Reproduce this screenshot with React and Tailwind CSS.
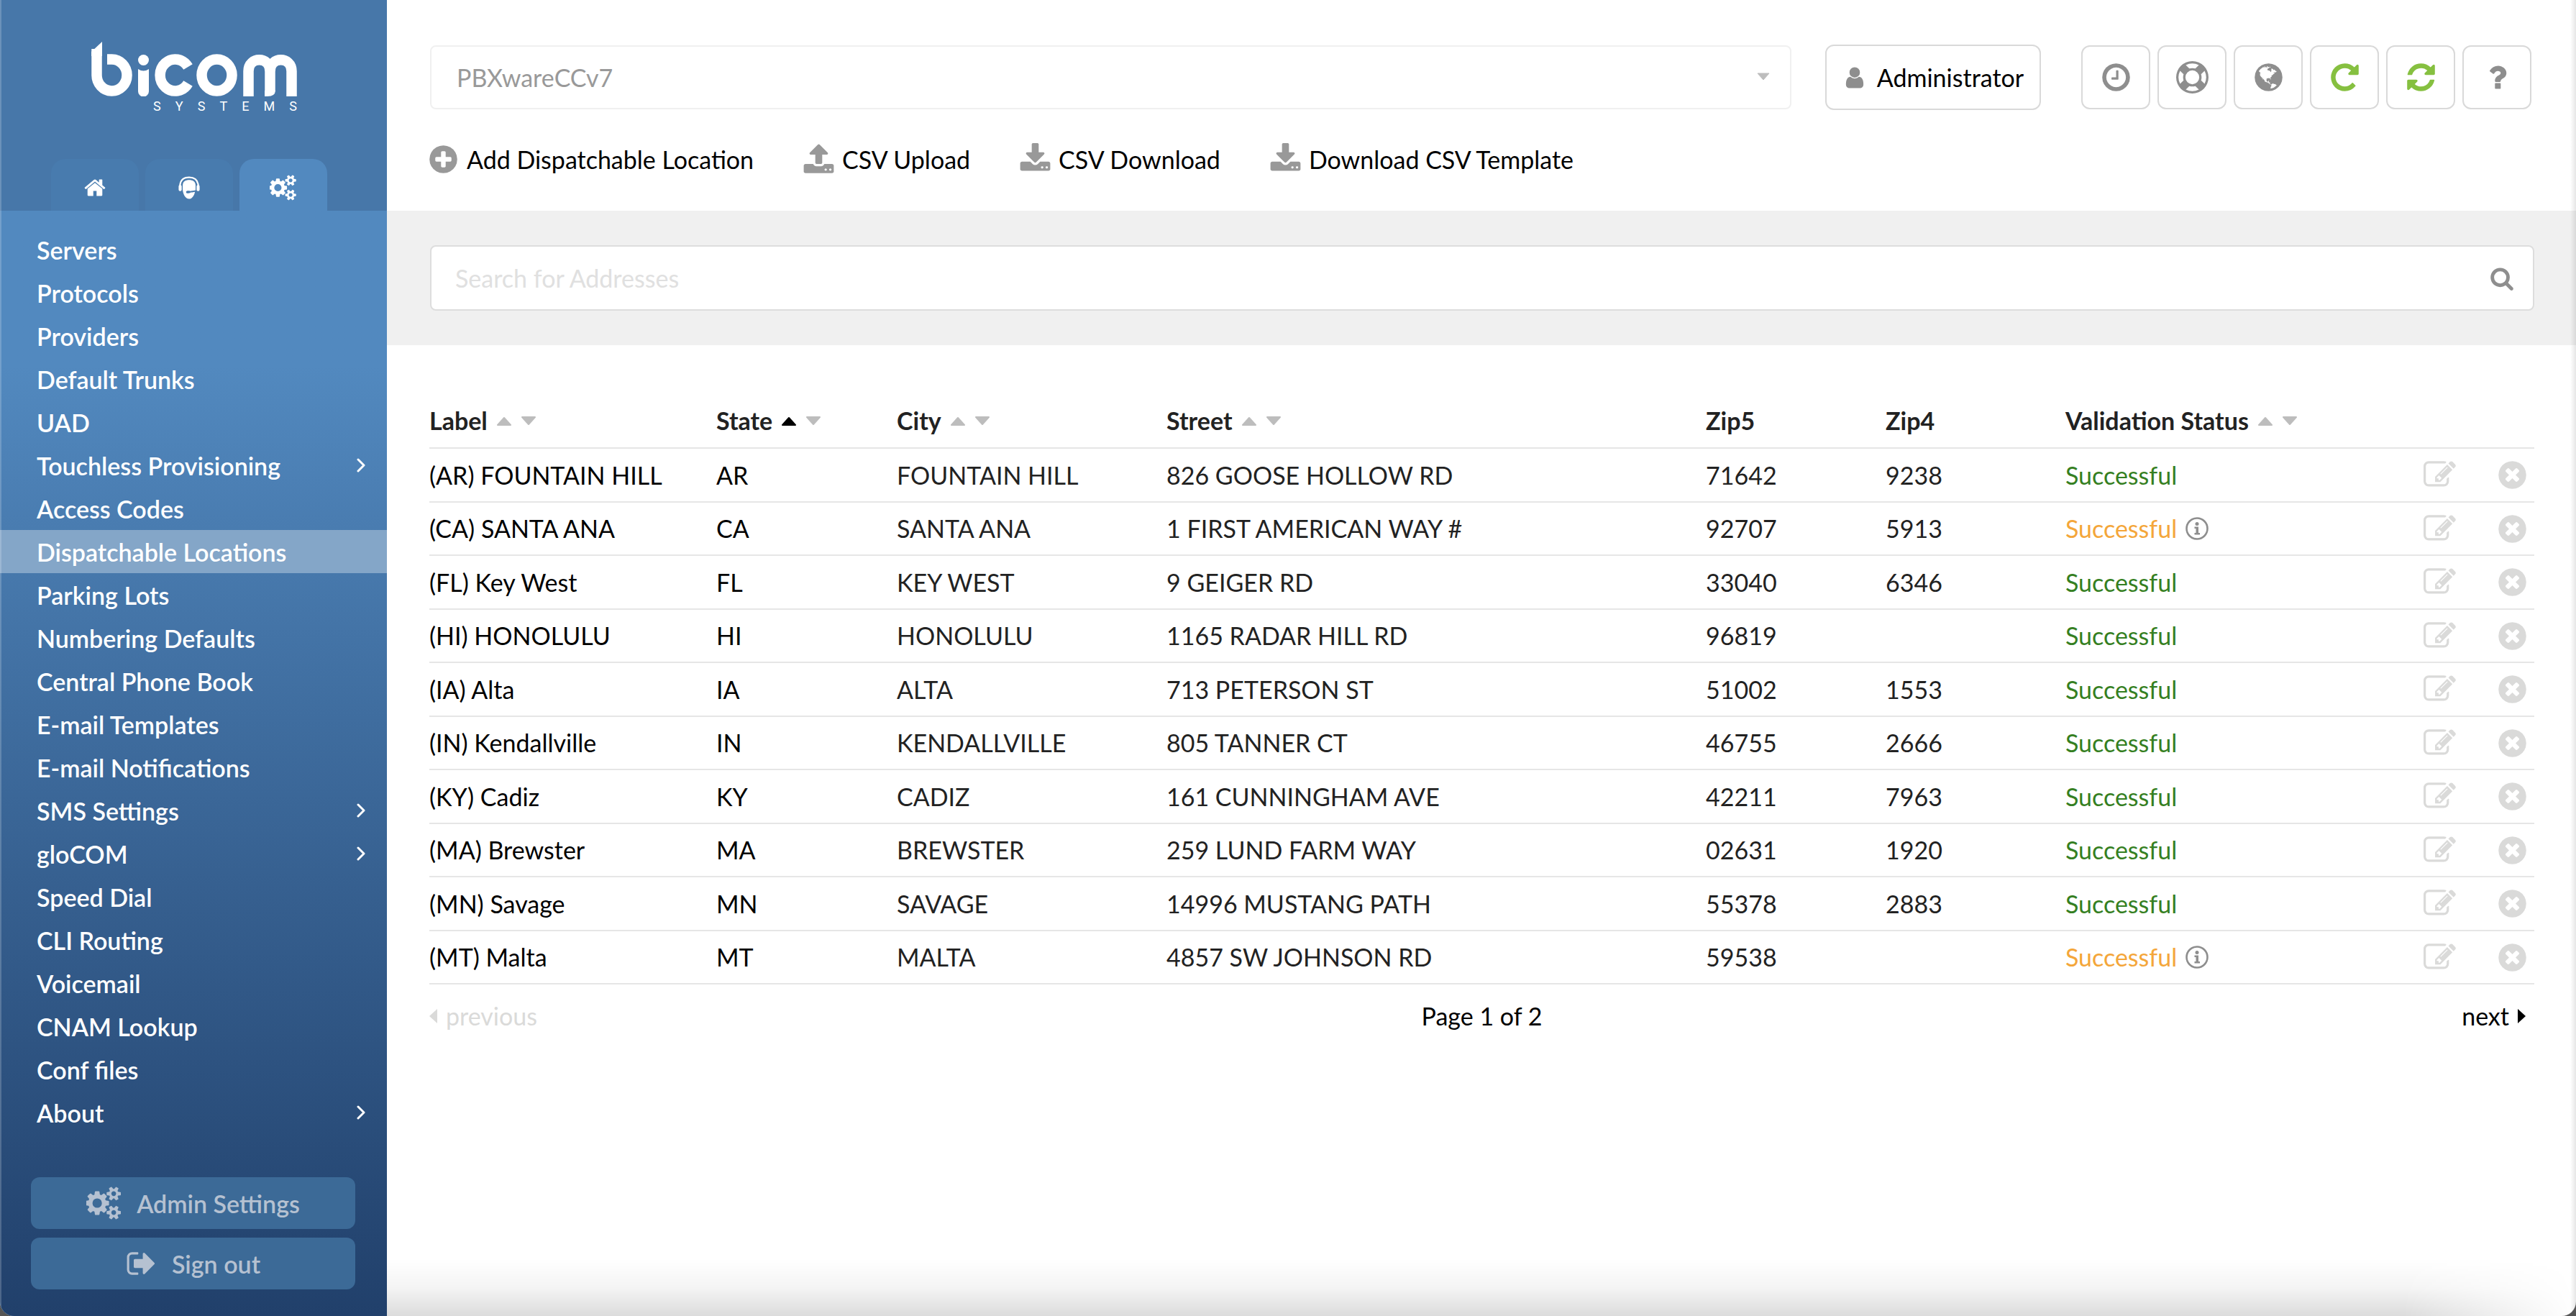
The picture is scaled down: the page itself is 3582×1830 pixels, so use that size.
const icons = {
  home: {
    w: 1792,
    d: 'M1472 992v480q0 26-19 45t-45 19h-384v-384h-256v384h-384q-26 0-45-19t-19-45v-480q0-1 .5-3t.5-3l575-474 575 474q1 2 1 6zm223-69l-62 74q-8 9-21 11h-3q-13 0-21-7l-692-577-692 577q-12 8-24 7-13-2-21-11l-62-74q-8-10-7-23.5t11-21.5l719-599q32-26 76-26t76 26l244 204v-195q0-14 9-23t23-9h192q14 0 23 9t9 23v408l219 182q10 8 11 21.5t-7 23.5z',
  },
  cogs: {
    w: 1920,
    d: 'M832 896q0-106-75-181t-181-75-181 75-75 181 75 181 181 75 181-75 75-181zm768 512q0-52-38-90t-90-38-90 38-38 90q0 53 37.5 90.5t90.5 37.5 90.5-37.5 37.5-90.5zm0-1024q0-52-38-90t-90-38-90 38-38 90q0 53 37.5 90.5t90.5 37.5 90.5-37.5 37.5-90.5zm-384 421v185q0 10-7 19.5t-16 10.5l-155 24q-11 35-32 76 34 48 90 115 7 11 7 20 0 12-7 19-23 30-82.5 89.5t-78.5 59.5q-11 0-21-7l-115-90q-37 19-77 31-11 108-23 155-7 24-30 24h-186q-11 0-20-7.5t-10-17.5l-23-153q-34-10-75-31l-118 89q-7 7-20 7-11 0-21-8-144-133-144-160 0-9 7-19 10-14 41-53t47-61q-23-44-35-82l-152-24q-10-1-17-9.5t-7-19.5v-185q0-10 7-19.5t16-10.5l155-24q11-35 32-76-34-48-90-115-7-11-7-20 0-12 7-20 22-30 82-89t79-59q11 0 21 7l115 90q34-18 77-32 11-108 23-154 7-24 30-24h186q11 0 20 7.5t10 17.5l23 153q34 10 75 31l118-89q8-7 20-7 11 0 21 8 144 133 144 160 0 8-7 19-12 16-42 54t-45 60q23 48 34 82l152 23q10 2 17 10.5t7 19.5zm640 533v140q0 16-149 31-12 27-30 52 51 113 51 138 0 4-4 7-122 71-124 71-8 0-46-47t-52-68q-20 2-30 2t-30-2q-14 21-52 68t-46 47q-2 0-124-71-4-3-4-7 0-25 51-138-18-25-30-52-149-15-149-31v-140q0-16 149-31 13-29 30-52-51-113-51-138 0-4 4-7 4-2 35-20t59-34 30-16q8 0 46 46.5t52 67.5q20-2 30-2t30 2q51-71 92-112l6-2q4 0 124 70 4 3 4 7 0 25-51 138 17 23 30 52 149 15 149 31zm0-1024v140q0 16-149 31-12 27-30 52 51 113 51 138 0 4-4 7-122 71-124 71-8 0-46-47t-52-68q-20 2-30 2t-30-2q-14 21-52 68t-46 47q-2 0-124-71-4-3-4-7 0-25 51-138-18-25-30-52-149-15-149-31v-140q0-16 149-31 13-29 30-52-51-113-51-138 0-4 4-7 4-2 35-20t59-34 30-16q8 0 46 46.5t52 67.5q20-2 30-2t30 2q51-71 92-112l6-2q4 0 124 70 4 3 4 7 0 25-51 138 17 23 30 52 149 15 149 31z',
  },
  signOut: {
    w: 1792,
    d: 'M704 1440q0 4 1 20t.5 26.5-3 23.5-10 19.5-20.5 6.5h-320q-119 0-203.5-84.5t-84.5-203.5v-704q0-119 84.5-203.5t203.5-84.5h320q13 0 22.5 9.5t9.5 22.5q0 4 1 20t.5 26.5-3 23.5-10 19.5-20.5 6.5h-320q-66 0-113 47t-47 113v704q0 66 47 113t113 47h312l11.5 1 11.5 3 8 5.5 7 9 2 13.5zm928-544q0 26-19 45l-544 544q-19 19-45 19t-45-19-19-45v-288h-448q-26 0-45-19t-19-45v-384q0-26 19-45t45-19h448v-288q0-26 19-45t45-19 45 19l544 544q19 19 19 45z',
  },
  plus: {
    w: 1792,
    d: 'M1344 960v-128q0-26-19-45t-45-19h-256v-256q0-26-19-45t-45-19h-128q-26 0-45 19t-19 45v256h-256q-26 0-45 19t-19 45v128q0 26 19 45t45 19h256v256q0 26 19 45t45 19h128q26 0 45-19t19-45v-256h256q26 0 45-19t19-45zm320-64q0 209-103 385.5t-279.5 279.5-385.5 103-385.5-103-279.5-279.5-103-385.5 103-385.5 279.5-279.5 385.5-103 385.5 103 279.5 279.5 103 385.5z',
  },
  upload: {
    w: 1792,
    d: 'M1344 1472q0-26-19-45t-45-19-45 19-19 45 19 45 45 19 45-19 19-45zm256 0q0-26-19-45t-45-19-45 19-19 45 19 45 45 19 45-19 19-45zm128-224v320q0 40-28 68t-68 28h-1472q-40 0-68-28t-28-68v-320q0-40 28-68t68-28h427q21 56 70.5 92t110.5 36h256q61 0 110.5-36t70.5-92h427q40 0 68 28t28 68zm-325-648q-17 40-59 40h-256v448q0 26-19 45t-45 19h-256q-26 0-45-19t-19-45v-448h-256q-42 0-59-40-17-39 14-69l448-448q18-19 45-19t45 19l448 448q31 30 14 69z',
  },
  download: {
    w: 1792,
    d: 'M1344 1344q0-26-19-45t-45-19-45 19-19 45 19 45 45 19 45-19 19-45zm256 0q0-26-19-45t-45-19-45 19-19 45 19 45 45 19 45-19 19-45zm128-224v320q0 40-28 68t-68 28h-1472q-40 0-68-28t-28-68v-320q0-40 28-68t68-28h465l135 136q58 56 136 56t136-56l136-136h464q40 0 68 28t28 68zm-325-569q17 41-14 70l-448 448q-18 19-45 19t-45-19l-448-448q-31-29-14-70 17-39 59-39h256v-448q0-26 19-45t45-19h256q26 0 45 19t19 45v448h256q42 0 59 39z',
  },
  user: {
    w: 1792,
    d: 'M1536 1399q0 109-62.5 187t-150.5 78h-854q-88 0-150.5-78t-62.5-187q0-85 8.5-160.5t31.5-152 58.5-131 94-89 134.5-34.5q131 128 313 128t313-128q76 0 134.5 34.5t94 89 58.5 131 31.5 152 8.5 160.5zm-256-887q0 159-112.5 271.5t-271.5 112.5-271.5-112.5-112.5-271.5 112.5-271.5 271.5-112.5 271.5 112.5 112.5 271.5z',
  },
  clock: {
    w: 1792,
    d: 'M1024 544v448q0 14-9 23t-23 9h-320q-14 0-23-9t-9-23v-64q0-14 9-23t23-9h224v-352q0-14 9-23t23-9h64q14 0 23 9t9 23zm416 352q0-148-73-273t-198-198-273-73-273 73-198 198-73 273 73 273 198 198 273 73 273-73 198-198 73-273zm224 0q0 209-103 385.5t-279.5 279.5-385.5 103-385.5-103-279.5-279.5-103-385.5 103-385.5 279.5-279.5 385.5-103 385.5 103 279.5 279.5 103 385.5z',
  },
  lifeRing: {
    w: 1792,
    d: 'M896 0q182 0 348 71t286 191 191 286 71 348-71 348-191 286-286 191-348 71-348-71-286-191-191-286-71-348 71-348 191-286 286-191 348-71zm0 128q-190 0-361 90l194 194q82-28 167-28t167 28l194-194q-171-90-361-90zm-678 1129l194-194q-28-82-28-167t28-167l-194-194q-90 171-90 361t90 361zm678 407q190 0 361-90l-194-194q-82 28-167 28t-167-28l-194 194q171 90 361 90zm0-384q159 0 271.5-112.5t112.5-271.5-112.5-271.5-271.5-112.5-271.5 112.5-112.5 271.5 112.5 271.5 271.5 112.5zm484-217l194 194q90-171 90-361t-90-361l-194 194q28 82 28 167t-28 167z',
  },
  globe: {
    w: 1792,
    d: 'M896 128q209 0 385.5 103t279.5 279.5 103 385.5-103 385.5-279.5 279.5-385.5 103-385.5-103-279.5-279.5-103-385.5 103-385.5 279.5-279.5 385.5-103zm274 521q-2 1-9.5 9.5t-13.5 9.5q2 0 4.5-5t5-11 3.5-7q6-7 22-15 14-6 52-12 34-8 51 11-2-2 9.5-13t14.5-12q3-2 15-4.5t15-7.5l2-22q-12 1-17.5-7t-6.5-21q0 2-6 8 0-7-4.5-8t-11.5 1-9 1q-10-3-15-7.5t-8-16.5-4-15q-2-5-9.5-10.5t-9.5-10.5q-1-2-2.5-5.5t-3-6.5-4-5.5-5.5-2.5-7 5-7.5 10-4.5 5q-3-2-6-1.5t-4.5 1-4.5 3-5 3.5q-3 2-8.5 3t-8.5 2q15-5-1-11-10-4-16-3 9-4 7.5-12t-8.5-14h5q-1-4-8.5-8.5t-17.5-8.5-13-6q-8-5-34-9.5t-33-.5q-5 6-4.5 10.5t4 14 3.5 12.5q1 6-5.5 13t-6.5 12q0 7 14 15.5t10 21.5q-3 8-16 16t-16 12q-5 8-1.5 18.5t10.5 16.5q2 2 1.5 4t-3.5 4.5-5.5 4-6.5 3.5l-3 2q-11 5-20.5-6t-13.5-26q-7-25-16-30-23-8-29 1-5-13-41-26-25-9-58-4 6-1 0-15-7-15-19-12 3-6 4-17.5t1-13.5q3-13 12-23 1-1 7-8.5t9.5-13.5.5-6q35 4 50-11 5-5 11.5-17t10.5-17q9-6 14-5.5t14.5 5.5 14.5 5q14 1 15.5-11t-7.5-20q12 1 3-17-4-7-8-9-12-4-27 5-8 4 2 8-1-1-9.5 10.5t-16.5 17.5-16-5q-1-1-5.5-13.5t-9.5-13.5q-8 0-16 15 3-8-11-15t-24-8q19-12-8-27-7-4-20.5-5t-19.5 4q-5 7-5.5 11.5t5 8 10.5 5.5 11.5 4 8.5 3q14 10 8 14-2 1-8.5 3.5t-11.5 4.5-6 4q-3 4 0 14t-2 14q-5-5-9-17.5t-7-16.5q7 9-25 6l-10-1q-4 0-16 2t-20.5 1-13.5-8q-4-8 0-20 1-4 4-2-4-3-11-9.5t-10-8.5q-46 15-94 41 6 1 12-1 5-2 13-6.5t10-5.5q34-14 42-7l5-5q14 16 20 25-7-4-30-1-20 6-22 12 7 12 5 18-4-3-11.5-10t-14.5-11-15-5q-16 0-22 1-146 80-235 222 7 7 12 8 4 1 5 9t2.5 11 11.5-3q9 8 3 19 1-1 44 27 19 17 21 21 3 11-10 18-1-2-9-9t-9-4q-3 5 .5 18.5t10.5 12.5q-7 0-9.5 16t-2.5 35.5-1 23.5l2 1q-3 12 5.5 34.5t21.5 19.5q-13 3 20 43 6 8 8 9 3 2 12 7.5t15 10 10 10.5q4 5 10 22.5t14 23.5q-2 6 9.5 20t10.5 23q-1 0-2.5 1t-2.5 1q3 7 15.5 14t15.5 13q1 3 2 10t3 11 8 2q2-20-24-62-15-25-17-29-3-5-5.5-15.5t-4.5-14.5q2 0 6 1.5t8.5 3.5 7.5 4 2 3q-3 7 2 17.5t12 18.5 17 19 12 13q6 6 14 19.5t0 13.5q9 0 20 10.5t17 19.5q5 8 8 26t5 24q2 7 8.5 13.5t12.5 9.5l16 8 13 7q5 2 18.5 10.5t21.5 11.5q10 4 16 4t14.5-2.5 13.5-3.5q15-2 29 15t21 21q36 19 55 11-2 1 .5 7.5t8 15.5 9 14.5 5.5 8.5q5 6 18 15t18 15q6-4 7-9-3 8 7 20t18 10q14-3 14-32-31 15-49-18 0-1-2.5-5.5t-4-8.5-2.5-8.5 0-7.5 5-3q9 0 10-3.5t-2-12.5-4-13q-1-8-11-20t-12-15q-5 9-16 8t-16-9q0 1-1.5 5.5t-1.5 6.5q-13 0-15-1 1-3 2.5-17.5t3.5-22.5q1-4 5.5-12t7.5-14.5 4-12.5-4.5-9.5-17.5-2.5q-19 1-26 20-1 3-3 10.5t-5 11.5-9 7q-7 3-24 2t-24-5q-13-8-22.5-29t-9.5-37q0-10 2.5-26.5t3-25-5.5-24.5q3-2 9-9.5t10-10.5q2-1 4.5-1.5t4.5 0 4-1.5 3-6q-1-1-4-3-3-3-4-3 7 3 28.5-1.5t27.5 1.5q15 11 22-2 0-1-2.5-9.5t-.5-13.5q5 27 29 9 3 3 15.5 5t17.5 5q3 2 7 5.5t5.5 4.5 5-.5 8.5-6.5q10 14 12 24 11 40 19 44 7 3 11 2t4.5-9.5 0-14-1.5-12.5l-1-8v-18l-1-8q-15-3-18.5-12t1.5-18.5 15-18.5q1-1 8-3.5t15.5-6.5 12.5-8q21-19 15-35 7 0 11-9-1 0-5-3t-7.5-5-4.5-2q9-5 2-16 5-3 7.5-11t7.5-10q9 12 21 2 8-8 1-16 5-7 20.5-10.5t18.5-9.5q7 2 8-2t1-12 3-12q4-5 15-9t13-5l17-11q3-4 0-4 18 2 31-11 10-11-6-20 3-6-3-9.5t-15-5.5q3-1 11.5-.5t10.5-1.5q15-10-7-16-17-5-43 12zm-163 877q206-36 351-189-3-3-12.5-4.5t-12.5-3.5q-18-7-24-8 1-7-2.5-13t-8-9-12.5-8-11-7q-2-2-7-6t-7-5.5-7.5-4.5-8.5-2-10 1l-3 1q-3 1-5.5 2.5t-5.5 3-4 3 0 2.5q-21-17-36-22-5-1-11-5.5t-10.5-7-10-1.5-11.5 7q-5 5-6 15t-2 13q-7-5 0-17.5t2-18.5q-3-6-10.5-4.5t-12 4.5-11.5 8.5-9 6.5-8.5 5.5-8.5 7.5q-3 4-6 12t-5 11q-2-4-11.5-6.5t-9.5-5.5q2 10 4 35t5 38q7 31-12 48-27 25-29 40-4 22 12 26 0 7-8 20.5t-7 21.5q0 6 2 16z',
  },
  repeat: {
    w: 1792,
    d: 'M1664 256v448q0 26-19 45t-45 19h-448q-42 0-59-40-17-39 14-69l138-138q-148-137-349-137-104 0-198.5 40.5t-163.5 109.5-109.5 163.5-40.5 198.5 40.5 198.5 109.5 163.5 163.5 109.5 198.5 40.5q119 0 225-52t179-147q7-10 23-12 15 0 25 9l137 138q9 8 9.5 20.5t-7.5 22.5q-109 132-264 204.5t-327 72.5q-156 0-298-61t-245-164-164-245-61-298 61-298 164-245 245-164 298-61q147 0 284.5 55.5t244.5 156.5l130-129q29-31 70-14 39 17 39 59z',
  },
  refresh: {
    w: 1792,
    d: 'M1639 1056q0 5-1 7-64 268-268 434.5t-478 166.5q-146 0-282.5-55t-243.5-157l-129 129q-19 19-45 19t-45-19-19-45v-448q0-26 19-45t45-19h448q26 0 45 19t19 45-19 45l-137 137q71 66 161 102t187 36q134 0 250-65t186-179q11-17 53-117 8-23 30-23h192q13 0 22.5 9.5t9.5 22.5zm25-800v448q0 26-19 45t-45 19h-448q-26 0-45-19t-19-45 19-45l138-138q-148-137-349-137-134 0-250 65t-186 179q-11 17-53 117-8 23-30 23h-199q-13 0-22.5-9.5t-9.5-22.5v-7q65-268 270-434.5t480-166.5q146 0 284 55.5t245 156.5l130-129q19-19 45-19t45 19 19 45z',
  },
  question: {
    w: 1792,
    d: 'M1088 1256v240q0 16-12 28t-28 12h-240q-16 0-28-12t-12-28v-240q0-16 12-28t28-12h240q16 0 28 12t12 28zm316-600q0 54-15.5 101t-35 76.5-55 59.5-57.5 43.5-61 35.5q-41 23-68.5 65t-27.5 67q0 17-12 32.5t-28 15.5h-240q-15 0-25.5-18.5t-10.5-37.5v-45q0-83 65-156.5t143-108.5q59-27 84-56t25-76q0-42-46.5-74t-107.5-32q-65 0-108 29-35 25-107 115-13 16-31 16-12 0-25-8l-164-125q-13-10-15.5-25t5.5-28q160-266 464-266 80 0 161 31t146 83 106 127.5 41 158.5z',
  },
  search: {
    w: 1792,
    d: 'M1216 832q0-185-131.5-316.5t-316.5-131.5-316.5 131.5-131.5 316.5 131.5 316.5 316.5 131.5 316.5-131.5 131.5-316.5zm512 832q0 52-38 90t-90 38q-54 0-90-38l-343-342q-179 124-399 124-143 0-273.5-55.5t-225-150-150-225-55.5-273.5 55.5-273.5 150-225 225-150 273.5-55.5 273.5 55.5 225 150 150 225 55.5 273.5q0 220-124 399l343 343q37 37 37 90z',
  },
  edit: {
    w: 1792,
    d: 'M888 1184l116-116-152-152-116 116v56h96v96h56zm440-720q-16-16-33 1l-350 350q-17 17-1 33t33-1l350-350q17-17 1-33zm80 594v190q0 119-84.5 203.5t-203.5 84.5h-832q-119 0-203.5-84.5t-84.5-203.5v-832q0-119 84.5-203.5t203.5-84.5h832q63 0 117 25 15 7 18 23 3 17-9 29l-49 49q-14 14-32 8-23-6-45-6h-832q-66 0-113 47t-47 113v832q0 66 47 113t113 47h832q66 0 113-47t47-113v-126q0-13 9-22l64-64q15-15 35-7t20 29zm-96-738l288 288-672 672h-288v-288zm444 132l-92 92-288-288 92-92q28-28 68-28t68 28l152 152q28 28 28 68t-28 68z',
  },
  remove: {
    w: 1792,
    d: 'M1277 1122q0-26-19-45l-181-181 181-181q19-19 19-45 0-27-19-46l-90-90q-19-19-46-19-26 0-45 19l-181 181-181-181q-19-19-45-19-27 0-46 19l-90 90q-19 19-19 46 0 26 19 45l181 181-181 181q-19 19-19 45 0 27 19 46l90 90q19 19 46 19 26 0 45-19l181-181 181 181q19 19 45 19 27 0 46-19l90-90q19-19 19-46zm387-226q0 209-103 385.5t-279.5 279.5-385.5 103-385.5-103-279.5-279.5-103-385.5 103-385.5 279.5-279.5 385.5-103 385.5 103 279.5 279.5 103 385.5z',
  },
};

const menu = [
  { label: 'Servers' },
  { label: 'Protocols' },
  { label: 'Providers' },
  { label: 'Default Trunks' },
  { label: 'UAD' },
  { label: 'Touchless Provisioning', sub: true },
  { label: 'Access Codes' },
  { label: 'Dispatchable Locations', active: true },
  { label: 'Parking Lots' },
  { label: 'Numbering Defaults' },
  { label: 'Central Phone Book' },
  { label: 'E-mail Templates' },
  { label: 'E-mail Notifications' },
  { label: 'SMS Settings', sub: true },
  { label: 'gloCOM', sub: true },
  { label: 'Speed Dial' },
  { label: 'CLI Routing' },
  { label: 'Voicemail' },
  { label: 'CNAM Lookup' },
  { label: 'Conf files' },
  { label: 'About', sub: true },
];

const locations = [
  { label: '(AR) FOUNTAIN HILL', state: 'AR', city: 'FOUNTAIN HILL', street: '826 GOOSE HOLLOW RD', zip5: '71642', zip4: '9238' },
  { label: '(CA) SANTA ANA', state: 'CA', city: 'SANTA ANA', street: '1 FIRST AMERICAN WAY #', zip5: '92707', zip4: '5913', info: true },
  { label: '(FL) Key West', state: 'FL', city: 'KEY WEST', street: '9 GEIGER RD', zip5: '33040', zip4: '6346' },
  { label: '(HI) HONOLULU', state: 'HI', city: 'HONOLULU', street: '1165 RADAR HILL RD', zip5: '96819', zip4: '' },
  { label: '(IA) Alta', state: 'IA', city: 'ALTA', street: '713 PETERSON ST', zip5: '51002', zip4: '1553' },
  { label: '(IN) Kendallville', state: 'IN', city: 'KENDALLVILLE', street: '805 TANNER CT', zip5: '46755', zip4: '2666' },
  { label: '(KY) Cadiz', state: 'KY', city: 'CADIZ', street: '161 CUNNINGHAM AVE', zip5: '42211', zip4: '7963' },
  { label: '(MA) Brewster', state: 'MA', city: 'BREWSTER', street: '259 LUND FARM WAY', zip5: '02631', zip4: '1920' },
  { label: '(MN) Savage', state: 'MN', city: 'SAVAGE', street: '14996 MUSTANG PATH', zip5: '55378', zip4: '2883' },
  { label: '(MT) Malta', state: 'MT', city: 'MALTA', street: '4857 SW JOHNSON RD', zip5: '59538', zip4: '', info: true },
];

const columns = [
  { name: 'Label', sort: true },
  { name: 'State', sort: true, sorted: true },
  { name: 'City', sort: true },
  { name: 'Street', sort: true },
  { name: 'Zip5' },
  { name: 'Zip4' },
  { name: 'Validation Status', sort: true },
];

const tools = [
  { icon: 'clock', title: 'Time', color: 'text-[#8e8e8e]' },
  { icon: 'lifeRing', title: 'Support', color: 'text-[#8e8e8e]' },
  { icon: 'globe', title: 'Language', color: 'text-[#8e8e8e]' },
  { icon: 'repeat', title: 'Reload', color: 'text-[#86c040]' },
  { icon: 'refresh', title: 'Restart', color: 'text-[#86c040]' },
  { icon: 'question', title: 'Help', color: 'text-[#8e8e8e]' },
];

function Icon({ name, className }) {
  const { w, d } = icons[name];
  return (
    <svg viewBox={`0 0 ${w} 1792`} fill="currentColor" className={className} aria-hidden="true">
      <path d={d} />
    </svg>
  );
}

function AgentIcon() {
  return (
    <svg viewBox="0 0 32 34" className="w-8 h-8" aria-hidden="true">
      <path d="M2.5 14C3 6 8 1.6 16 1.6S29 6 29.5 14" fill="none" stroke="currentColor" strokeWidth="2.4" />
      <rect x="0.5" y="13" width="4.5" height="9" rx="2" fill="currentColor" />
      <rect x="27" y="13" width="4.5" height="9" rx="2" fill="currentColor" />
      <path
        d="M16 5.5C22 5.5 25.5 8.5 25.5 13.5V20.8C22 21.6 19 22 17.5 22.1C16.5 21.2 12 21.2 11.6 22.7C11.3 25 12.5 25.4 15 25.3C17 25.3 17.5 24.2 19 24C21.5 23.7 22.5 23.5 24.6 23C23.5 29 20 33.5 16 33.5C10 33.5 6.5 25 6.5 19V13.5C6.5 8.5 10 5.5 16 5.5Z"
        fill="currentColor"
      />
    </svg>
  );
}

function Logo() {
  return (
    <div className="w-[286px] ml-[127px] flex flex-col items-end text-white">
      <svg viewBox="0 0 286 76" className="w-full h-[76px]" aria-label="bicom" role="img">
        <g fill="none" stroke="currentColor" strokeWidth="14.5">
          <path d="M7.5 10V46A21 22 0 1 0 28.5 24.5H22" />
          <path d="M134.5 35A21 22 0 1 0 134.5 58" />
          <ellipse cx="174.5" cy="46.5" rx="21" ry="22" />
          <path d="M218.5 76V41C218.5 20 248.5 20 248.5 41V69" />
          <path d="M248.5 41C248.5 20 278.5 20 278.5 41V76" />
        </g>
        <path d="M0 14L15 0V20H0Z" fill="currentColor" />
        <circle cx="72.5" cy="25.5" r="7.5" fill="currentColor" />
        <path d="M65 38Q72.5 43 80 38V69A7.5 7.5 0 0 1 65 69Z" fill="currentColor" />
        <path d="M241 68H256Q255.5 76 245 76H241Z" fill="currentColor" />
      </svg>
      <div className="w-[200px] mt-1 flex justify-between font-['Roboto',sans-serif] text-[18px] leading-5">
        {'SYSTEMS'.split('').map((c, i) => (
          <span key={i}>{c}</span>
        ))}
      </div>
    </div>
  );
}

function SortArrows({ up }) {
  return (
    <span className="inline-flex gap-3 ml-3">
      <svg viewBox="0 0 22 13" className={up ? 'w-[22px] h-[13px] text-black' : 'w-[22px] h-[13px] text-[#bdbdbd]'}>
        <path d="M2 12L11 2L20 12Z" fill="currentColor" stroke="currentColor" strokeWidth="2" strokeLinejoin="round" />
      </svg>
      <svg viewBox="0 0 22 13" className="w-[22px] h-[13px] text-[#bdbdbd]">
        <path d="M2 1L11 11L20 1Z" fill="currentColor" stroke="currentColor" strokeWidth="2" strokeLinejoin="round" />
      </svg>
    </span>
  );
}

function InfoIcon() {
  return (
    <svg viewBox="0 0 32 32" className="w-8 h-8 text-[#8e8e8e]" role="img" aria-label="Info">
      <circle cx="16" cy="16" r="14.5" fill="none" stroke="currentColor" strokeWidth="2.6" />
      <circle cx="16" cy="9.5" r="2.5" fill="currentColor" />
      <path d="M12.5 13.5H18V22H20V24.5H12.5V22H14.5V16H12.5Z" fill="currentColor" />
    </svg>
  );
}

function Sidebar() {
  const tab = 'w-[122px] h-[72px] rounded-t-[20px] flex items-center justify-center pt-2';
  return (
    <aside className="w-[538px] shrink-0 flex flex-col text-white bg-[#5289bf]">
      <div className="h-[293px] bg-[#4777a9] flex flex-col justify-between pt-[58px]">
        <Logo />
        <div className="flex gap-[9px] pl-[71px]">
          <button className={tab + ' bg-[#487bae]'} aria-label="Home">
            <Icon name="home" className="w-8 h-8" />
          </button>
          <button className={tab + ' bg-[#487bae]'} aria-label="Agents">
            <AgentIcon />
          </button>
          <button className={tab + ' bg-[#5289bf]'} aria-label="Settings">
            <Icon name="cogs" className="w-[38px] h-[36px]" />
          </button>
        </div>
      </div>
      <div className="grow flex flex-col bg-linear-to-b from-[#5289bf] from-14% to-[#21406b] pt-6">
        <nav>
          {menu.map((m) => (
            <a
              key={m.label}
              href="#"
              className={
                'h-[60px] pl-[51px] pr-[30px] flex items-center justify-between text-[34px] font-semibold' +
                (m.active ? ' bg-[#84a6c8]' : '')
              }
            >
              {m.label}
              {m.sub && (
                <svg viewBox="0 0 12 20" className="w-3 h-5" aria-hidden="true">
                  <path d="M2 2L10 10L2 18" fill="none" stroke="currentColor" strokeWidth="3" strokeLinecap="round" strokeLinejoin="round" />
                </svg>
              )}
            </a>
          ))}
        </nav>
        <div className="mt-auto flex flex-col gap-3 pl-[43px] pr-11 pb-[37px] text-[34px] font-semibold text-[#b5c1d1]">
          <button className="h-[72px] rounded-xl bg-[#3c6a97] flex items-center justify-center gap-5">
            <Icon name="cogs" className="w-[50px] h-[46px]" />
            Admin Settings
          </button>
          <button className="h-[72px] rounded-xl bg-[#3c6a97] flex items-center justify-center gap-5">
            <Icon name="signOut" className="w-[44px] h-[44px]" />
            Sign out
          </button>
        </div>
      </div>
    </aside>
  );
}

function Header() {
  const action = 'flex items-center gap-[10px]';
  return (
    <header className="h-[293px] pl-[60px] pr-[62px] pt-[62px]">
      <div className="flex items-center">
        <div className="grow relative">
          <select
            aria-label="Server"
            className="w-full h-[89px] appearance-none rounded-lg border-2 border-[#f0f0f0] bg-white pl-[35px] text-[34px] text-[#999]"
          >
            <option>PBXwareCCv7</option>
          </select>
          <svg viewBox="0 0 18 11" className="absolute right-[30px] top-[38px] w-[18px] h-[11px] text-[#bdbdbd]">
            <path d="M1 1L9 10L17 1Z" fill="currentColor" stroke="currentColor" strokeLinejoin="round" />
          </svg>
        </div>
        <button className="ml-[47px] w-[300px] h-[91px] rounded-xl border-2 border-[#d9d9d9] flex items-center justify-center gap-[14px] text-[34px]">
          <Icon name="user" className="w-[34px] h-[34px] text-[#8e8e8e]" />
          Administrator
        </button>
        <div className="ml-[56px] flex gap-[10px]">
          {tools.map((t) => (
            <button
              key={t.icon}
              title={t.title}
              className={'w-[96px] h-[89px] rounded-xl border-2 border-[#d9d9d9] flex items-center justify-center ' + t.color}
            >
              <Icon name={t.icon} className="w-[45px] h-[45px]" />
            </button>
          ))}
        </div>
      </div>
      <div className="mt-[43px] -ml-1 flex gap-[68px] text-[34px] text-black">
        <button className={action}>
          <Icon name="plus" className="w-[45px] h-[45px] text-[#999]" />
          Add Dispatchable Location
        </button>
        <button className={action}>
          <Icon name="upload" className="w-[45px] h-[45px] text-[#999]" />
          CSV Upload
        </button>
        <button className={action}>
          <Icon name="download" className="w-[45px] h-[45px] text-[#999]" />
          CSV Download
        </button>
        <button className={action}>
          <Icon name="download" className="w-[45px] h-[45px] text-[#999]" />
          Download CSV Template
        </button>
      </div>
    </header>
  );
}

function SearchBar() {
  return (
    <div className="h-[187px] bg-[#f0f0f0] flex items-center pl-[60px] pr-[58px]">
      <div className="grow h-[91px] rounded-lg border-2 border-[#ddd] bg-white flex items-center pl-[33px] pr-[26px]">
        <input
          type="text"
          aria-label="Search for Addresses"
          placeholder="Search for Addresses"
          className="grow text-[34px] outline-none placeholder:text-[#e0e0e0]"
        />
        <button aria-label="Search">
          <Icon name="search" className="w-[34px] h-[34px] text-[#8e8e8e]" />
        </button>
      </div>
    </div>
  );
}

function LocationsTable() {
  return (
    <table className="w-full table-fixed text-left text-[34px] leading-10 text-[#222]">
      <colgroup>
        <col className="w-[399px]" />
        <col className="w-[251px]" />
        <col className="w-[375px]" />
        <col />
        <col className="w-[250px]" />
        <col className="w-[250px]" />
        <col className="w-[490px]" />
        <col className="w-[162px]" />
      </colgroup>
      <thead>
        <tr className="h-[75px] border-b-2 border-[#e6e6e6]">
          {columns.map((c) => (
            <th key={c.name} className="font-bold">
              <span className="inline-flex items-center">
                {c.name}
                {c.sort && <SortArrows up={c.sorted} />}
              </span>
            </th>
          ))}
          <th aria-label="Actions" />
        </tr>
      </thead>
      <tbody>
        {locations.map((l) => (
          <tr key={l.label} className="odd:h-[75px] even:h-[74px] border-b-2 border-[#e6e6e6]">
            <td className="text-black">{l.label}</td>
            <td className="text-black">{l.state}</td>
            <td>{l.city}</td>
            <td>{l.street}</td>
            <td>{l.zip5}</td>
            <td>{l.zip4}</td>
            <td>
              <span className={l.info ? 'flex items-center gap-3 text-[#f4a63a]' : 'flex items-center text-[#357f22]'}>
                Successful
                {l.info && <InfoIcon />}
              </span>
            </td>
            <td>
              <div className="flex justify-between pl-2 pr-2 text-[#dadad9]">
                <button aria-label={'Edit ' + l.label}>
                  <Icon name="edit" className="w-[45px] h-[45px]" />
                </button>
                <button aria-label={'Delete ' + l.label}>
                  <Icon name="remove" className="w-[45px] h-[45px]" />
                </button>
              </div>
            </td>
          </tr>
        ))}
      </tbody>
    </table>
  );
}

function Pager() {
  return (
    <div className="grid grid-cols-3 items-center mt-6 text-[34px] leading-10 text-black">
      <button className="justify-self-start flex items-center gap-3 text-[#dadad9]" disabled>
        <svg viewBox="0 0 11 20" className="w-[11px] h-5">
          <path d="M0 10L11 0V20Z" fill="currentColor" />
        </svg>
        previous
      </button>
      <span className="justify-self-center">Page 1 of 2</span>
      <button className="justify-self-end flex items-center gap-3 pr-3">
        next
        <svg viewBox="0 0 11 20" className="w-[11px] h-5">
          <path d="M11 10L0 0V20Z" fill="currentColor" />
        </svg>
      </button>
    </div>
  );
}

export default function App() {
  return (
    <div className="bg-[#555]">
      <div className="relative min-h-screen flex overflow-hidden rounded-b-[20px] bg-white font-['Lato',sans-serif] text-black">
        <Sidebar />
        <main className="grow min-w-0">
          <Header />
          <SearchBar />
          <section className="pl-[59px] pr-[58px] pt-[68px]">
            <LocationsTable />
            <Pager />
          </section>
        </main>
        {/* window edges */}
        <div className="absolute inset-y-0 left-0 w-[2px] bg-white/20" />
        <div className="absolute inset-y-0 right-0 w-2 bg-linear-to-r from-transparent to-black/10" />
        <div className="absolute bottom-0 right-0 left-[538px] h-[80px] bg-linear-to-b from-transparent via-black/4 to-black/14 [mask-image:linear-gradient(to_left,transparent,black_240px)]" />
      </div>
    </div>
  );
}
